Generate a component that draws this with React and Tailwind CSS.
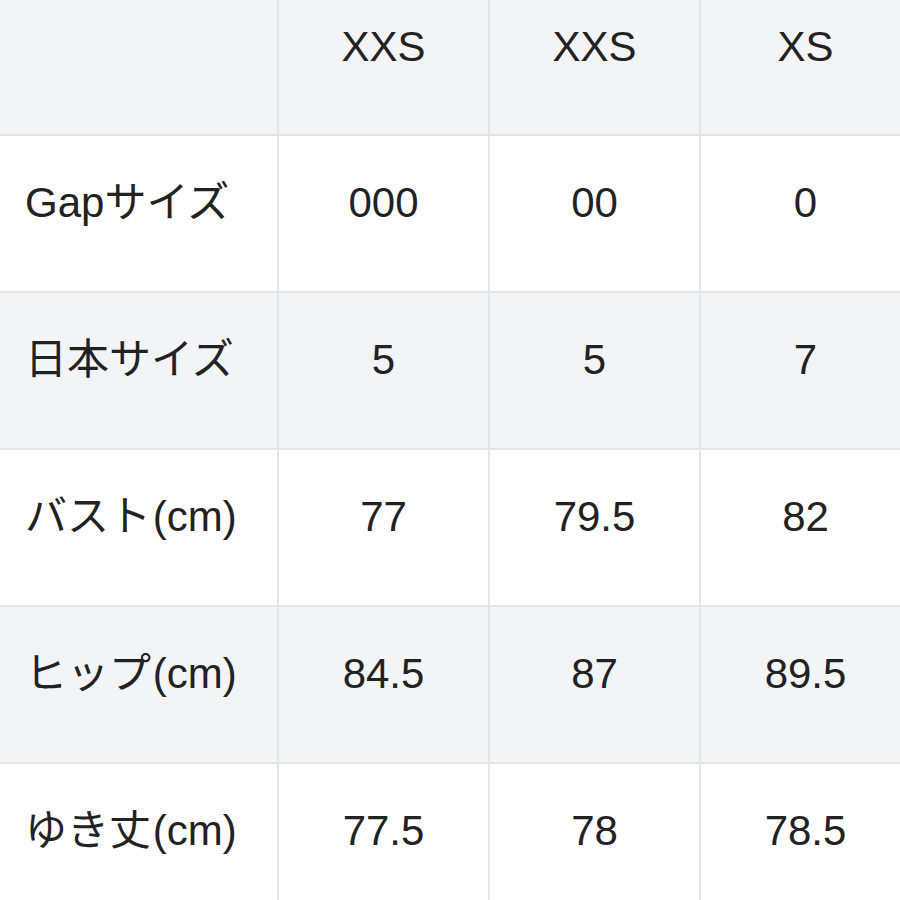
const cols = ['XXS', 'XXS', 'XS'];

const rows = [
  { label: 'Gapサイズ', values: ['000', '00', '0'], bg: 'bg-white' },
  { label: '日本サイズ', values: ['5', '5', '7'], bg: 'bg-[#f3f4f6]' },
  { label: 'バスト (cm)', values: ['77', '79.5', '82'], bg: 'bg-white' },
  { label: 'ヒップ (cm)', values: ['84.5', '87', '89.5'], bg: 'bg-[#f3f4f6]' },
  { label: 'ゆき丈 (cm)', values: ['77.5', '78', '78.5'], bg: 'bg-white' },
];

export default function App() {
  return (
    <div className="w-[900px] h-[900px] overflow-hidden bg-white">
      <div
        className="grid grid-cols-[277px_209px_209px_209px] grid-rows-[134px_155px_155px_155px_155px_155px] gap-[2px] bg-[#e3e5e8] w-[910px] text-[42px] text-[#222222] leading-none"
        style={{ fontFamily: '"Liberation Sans", Arial, "Noto Sans CJK JP", sans-serif' }}
      >
        {/* header */}
        <div className="bg-[#f3f4f6]" />
        {cols.map((c, i) => (
          <div key={i} className="bg-[#f3f4f6] flex items-center justify-center pb-[40px]">
            {c}
          </div>
        ))}

        {rows.map((r, ri) => (
          <>
            <div key={'l' + ri} className={`${r.bg} flex items-center pl-[25px] pb-[22px] whitespace-nowrap [word-spacing:-10px]`}>
              {r.label}
            </div>
            {r.values.map((v, vi) => (
              <div key={ri + '-' + vi} className={`${r.bg} flex items-center justify-center pb-[22px]`}>
                {v}
              </div>
            ))}
          </>
        ))}
      </div>
    </div>
  );
}
